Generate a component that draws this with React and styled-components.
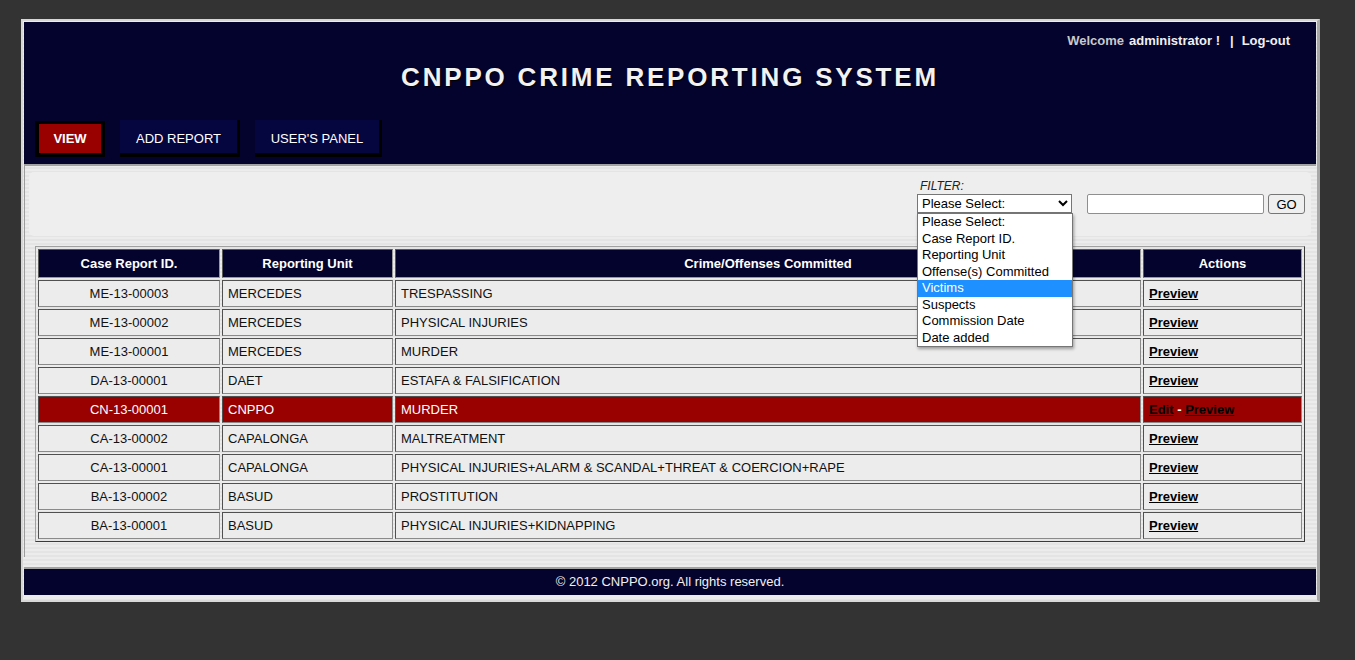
import React from "react";
import styled, { createGlobalStyle } from "styled-components";

const GlobalStyle = createGlobalStyle`
  html, body { margin: 0; padding: 0; background: #333333; }
  body { font-family: "Liberation Sans", Arial, sans-serif; font-size: 13px; }
`;

const NAVY = "#04032d";
const RED = "#990000";

const Page = styled.div`
  padding: 19px 0 0 21px;
  min-height: 660px;
  box-sizing: border-box;
`;

const Frame = styled.div`
  width: 1299px;
  box-sizing: border-box;
  border-style: solid;
  border-width: 2px 3px 2px 2px;
  border-color: #d6d6d6 #a8a8a8 #d9d9d9 #d6d6d6;
  padding: 1px;
  background: repeating-linear-gradient(
    to bottom,
    #ececec 0px,
    #ececec 2px,
    #e4e4e4 2px,
    #e4e4e4 4px
  );
`;

const Header = styled.header`
  height: 142px;
  box-sizing: border-box;
  background: ${NAVY};
  display: flex;
  flex-direction: column;
  padding: 11px 0 7px 0;
`;

const TopBar = styled.div`
  text-align: right;
  padding-right: 26px;
  line-height: 15px;
  font-size: 13px;
  font-weight: bold;
  color: #f0f0f0;
`;

const Muted = styled.span`
  color: #c9c9c9;
  margin-right: 5px;
`;

const Sep = styled.span`
  margin: 0 8px 0 10px;
`;

const TopLink = styled.a`
  color: #f0f0f0;
  text-decoration: none;
`;

const Title = styled.h1`
  margin: 14px 0 0 0;
  text-align: center;
  font-size: 26px;
  line-height: 30px;
  font-weight: bold;
  letter-spacing: 2.8px;
  color: #f2f2f2;
  text-shadow: 1px 1px 1px #000;
`;

const Nav = styled.nav`
  margin-top: auto;
  display: flex;
  align-items: flex-end;
  gap: 15px;
  padding-left: 11px;
`;

const Tab = styled.a`
  display: flex;
  align-items: center;
  justify-content: center;
  box-sizing: content-box;
  width: ${(p) => p.$w}px;
  height: ${(p) => (p.$active ? 29 : 30)}px;
  padding-top: ${(p) => (p.$active ? 0 : 3)}px;
  background: ${(p) => (p.$active ? RED : "#05053f")};
  color: #fff;
  font-size: 13px;
  font-weight: ${(p) => (p.$active ? "bold" : "normal")};
  border-style: solid;
  border-color: #000;
  border-width: ${(p) => (p.$active ? "3px 4px 4px 4px" : "0 3px 4px 0")};
  text-decoration: none;
`;

const Content = styled.main`
  border-top: 2px solid #a2a2a2;
  border-left: 1px solid #9c9c9c;
  padding: 6px 5px 15px 4px;
`;

const FilterBar = styled.div`
  height: 64px;
  box-sizing: border-box;
  background: #eeeeee;
  border-radius: 5px;
  display: flex;
  justify-content: flex-end;
  align-items: flex-start;
  padding: 7px 6px 0 0;
`;

const FilterGroup = styled.div`
  position: relative;
  display: flex;
  flex-direction: column;
  margin-right: 15px;
`;

const FilterLabel = styled.label`
  font-size: 12px;
  font-style: italic;
  line-height: 14px;
  margin: 0 0 1px 3px;
  color: #222;
`;

const Select = styled.select`
  width: 155px;
  height: 19px;
  margin: 0;
  box-sizing: border-box;
  font-family: "Liberation Sans", Arial, sans-serif;
  font-size: 13px;
  color: #000;
  background: #fff;
`;

const OptionList = styled.ul`
  position: absolute;
  top: 34px;
  left: 0;
  width: 156px;
  box-sizing: border-box;
  margin: 0;
  padding: 0;
  list-style: none;
  border: 1px solid #767676;
  background: #fff;
  box-shadow: 1px 2px 3px rgba(0, 0, 0, 0.35);
  z-index: 10;
`;

const OptionItem = styled.li`
  height: 16.5px;
  line-height: 16.5px;
  padding-left: 4px;
  font-size: 13px;
  white-space: nowrap;
  color: ${(p) => (p.$selected ? "#fff" : "#000")};
  background: ${(p) => (p.$selected ? "#1e90ff" : "#fff")};
`;

const SearchInput = styled.input`
  margin: 15px 0 0 0;
  width: 177px;
  height: 20px;
  box-sizing: border-box;
  border: 1px solid #8f8f8f;
  border-radius: 2px;
  background: #fff;
  font-family: "Liberation Sans", Arial, sans-serif;
  font-size: 13px;
`;

const GoButton = styled.button`
  margin: 15px 0 0 4px;
  width: 37px;
  height: 20px;
  box-sizing: border-box;
  padding: 0;
  border: 1px solid #767676;
  border-radius: 3px;
  background: #efefef;
  color: #000;
  font-family: "Liberation Sans", Arial, sans-serif;
  font-size: 13px;
`;

const Table = styled.table`
  width: 1270px;
  margin: 10px auto 0;
  table-layout: fixed;
  border-collapse: separate;
  border-spacing: 2px;
  border: 1px solid;
  border-color: #a0a0a0 #3a3a3a #3a3a3a #a0a0a0;
`;

const HeadRow = styled.tr`
  height: 29px;
`;

const Th = styled.th`
  width: ${(p) => (p.$w ? `${p.$w}px` : "auto")};
  box-sizing: border-box;
  background: ${NAVY};
  color: #fff;
  font-size: 13px;
  font-weight: bold;
  text-align: center;
  padding: 0 5px;
  border: 1px solid;
  border-color: #5a5a5a #9a9a9a #9a9a9a #5a5a5a;
`;

const Row = styled.tr`
  height: 27px;
`;

const Td = styled.td`
  box-sizing: border-box;
  background: ${(p) => (p.$hl ? RED : "#ececec")};
  color: ${(p) => (p.$hl ? "#fff" : "#111")};
  font-size: 13px;
  line-height: 15px;
  text-align: ${(p) => (p.$center ? "center" : "left")};
  padding: 0 5px;
  border: 1px solid;
  border-color: #505050 #8a8a8a #8a8a8a #505050;
  white-space: nowrap;
  overflow: hidden;
`;

const ActionLink = styled.a`
  color: #000;
  font-weight: bold;
  text-decoration: underline;
`;

const Dash = styled.span`
  color: #fff;
  font-weight: bold;
`;

const Footer = styled.footer`
  margin-top: 10px;
  border-top: 2px solid #a2a2a2;
  border-bottom: 4px solid #ececec;
  background: ${NAVY};
  height: 26px;
  line-height: 26px;
  text-align: center;
  color: #f0f0f0;
  font-size: 13px;
`;

const options = [
  "Please Select:",
  "Case Report ID.",
  "Reporting Unit",
  "Offense(s) Committed",
  "Victims",
  "Suspects",
  "Commission Date",
  "Date added",
];

const rows = [
  ["ME-13-00003", "MERCEDES", "TRESPASSING"],
  ["ME-13-00002", "MERCEDES", "PHYSICAL INJURIES"],
  ["ME-13-00001", "MERCEDES", "MURDER"],
  ["DA-13-00001", "DAET", "ESTAFA & FALSIFICATION"],
  ["CN-13-00001", "CNPPO", "MURDER", true],
  ["CA-13-00002", "CAPALONGA", "MALTREATMENT"],
  ["CA-13-00001", "CAPALONGA", "PHYSICAL INJURIES+ALARM & SCANDAL+THREAT & COERCION+RAPE"],
  ["BA-13-00002", "BASUD", "PROSTITUTION"],
  ["BA-13-00001", "BASUD", "PHYSICAL INJURIES+KIDNAPPING"],
];

export default function App() {
  return (
    <Page>
      <GlobalStyle />
      <Frame>
        <Header>
          <TopBar>
            <Muted>Welcome</Muted>administrator !<Sep>|</Sep>
            <TopLink href="#">Log-out</TopLink>
          </TopBar>
          <Title>CNPPO CRIME REPORTING SYSTEM</Title>
          <Nav>
            <Tab href="#" $active $w={62}>VIEW</Tab>
            <Tab href="#" $w={117}>ADD REPORT</Tab>
            <Tab href="#" $w={124}>USER'S PANEL</Tab>
          </Nav>
        </Header>
        <Content>
          <FilterBar>
            <FilterGroup>
              <FilterLabel>FILTER:</FilterLabel>
              <Select defaultValue="">
                <option value="">Please Select:</option>
                {options.slice(1).map((o) => (
                  <option key={o} value={o}>{o}</option>
                ))}
              </Select>
              <OptionList>
                {options.map((o) => (
                  <OptionItem key={o} $selected={o === "Victims"}>{o}</OptionItem>
                ))}
              </OptionList>
            </FilterGroup>
            <SearchInput type="text" />
            <GoButton type="button">GO</GoButton>
          </FilterBar>
          <Table>
            <thead>
              <HeadRow>
                <Th $w={182}>Case Report ID.</Th>
                <Th $w={171}>Reporting Unit</Th>
                <Th $w={746}>Crime/Offenses Committed</Th>
                <Th>Actions</Th>
              </HeadRow>
            </thead>
            <tbody>
              {rows.map(([id, unit, crime, hl]) => (
                <Row key={id}>
                  <Td $center $hl={hl}>{id}</Td>
                  <Td $hl={hl}>{unit}</Td>
                  <Td $hl={hl}>{crime}</Td>
                  <Td $hl={hl}>
                    {hl ? (
                      <>
                        <ActionLink href="#">Edit</ActionLink>
                        <Dash> - </Dash>
                        <ActionLink href="#">Preview</ActionLink>
                      </>
                    ) : (
                      <ActionLink href="#">Preview</ActionLink>
                    )}
                  </Td>
                </Row>
              ))}
            </tbody>
          </Table>
        </Content>
        <Footer>© 2012 CNPPO.org. All rights reserved.</Footer>
      </Frame>
    </Page>
  );
}
